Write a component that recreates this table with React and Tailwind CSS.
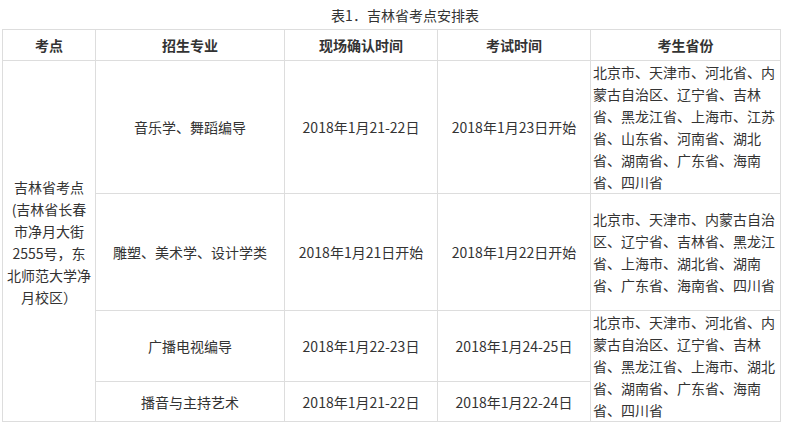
export default function App() {
  const font = { fontFamily: '"Noto Sans CJK SC", "Noto Sans", sans-serif' };
  const p1 = [
    "北京市、天津市、河北省、内",
    "蒙古自治区、辽宁省、吉林",
    "省、黑龙江省、上海市、江苏",
    "省、山东省、河南省、湖北",
    "省、湖南省、广东省、海南",
    "省、四川省",
  ];
  const p2 = [
    "北京市、天津市、内蒙古自治",
    "区、辽宁省、吉林省、黑龙江",
    "省、上海市、湖北省、湖南",
    "省、广东省、海南省、四川省",
  ];
  const p3 = [
    "北京市、天津市、河北省、内",
    "蒙古自治区、辽宁省、吉林",
    "省、黑龙江省、上海市、湖北",
    "省、湖南省、广东省、海南",
    "省、四川省",
  ];
  const c1 = ["吉林省考点", "(吉林省长春", "市净月大街", "2555号，东", "北师范大学净", "月校区）"];
  const cell = "bg-white flex items-center justify-center text-center";
  const lines = (arr) => arr.map((l, i) => (
    <div key={i} className="whitespace-nowrap">{l}</div>
  ));
  return (
    <div className="w-[785px] h-[426px] bg-white text-[#333] text-[14px] leading-[22px]" style={font}>
      <div className="h-[29px] flex items-center justify-center pl-[25px] text-[14px] text-[#333]">
        表1．吉林省考点安排表
      </div>
      <div className="pl-[2px]">
        <div className="w-[779px] grid grid-cols-[92px_188px_152px_152px_189px] grid-rows-[30px_132px_116px_70px_39px] gap-px p-px bg-[#dddddd]">
          <div className={cell + " font-bold"}>考点</div>
          <div className={cell + " font-bold"}>招生专业</div>
          <div className={cell + " font-bold"}>现场确认时间</div>
          <div className={cell + " font-bold"}>考试时间</div>
          <div className={cell + " font-bold"}>考生省份</div>

          <div className={cell + " row-span-4 flex-col pt-[2px]"}>{lines(c1)}</div>
          <div className={cell}>音乐学、舞蹈编导</div>
          <div className={cell}>2018年1月21-22日</div>
          <div className={cell}>2018年1月23日开始</div>
          <div className="bg-white flex flex-col justify-center px-[2px]">{lines(p1)}</div>

          <div className={cell}>雕塑、美术学、设计学类</div>
          <div className={cell}>2018年1月21日开始</div>
          <div className={cell}>2018年1月22日开始</div>
          <div className="bg-white flex flex-col justify-center px-[2px]">{lines(p2)}</div>

          <div className={cell}>广播电视编导</div>
          <div className={cell}>2018年1月22-23日</div>
          <div className={cell}>2018年1月24-25日</div>
          <div className="bg-white flex flex-col justify-center px-[2px] row-span-2">{lines(p3)}</div>

          <div className={cell}>播音与主持艺术</div>
          <div className={cell}>2018年1月21-22日</div>
          <div className={cell}>2018年1月22-24日</div>
        </div>
      </div>
    </div>
  );
}
